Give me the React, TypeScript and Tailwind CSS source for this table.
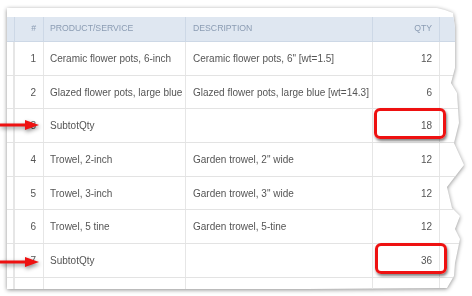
import React from 'react';

type Row = { n: string; product: string; desc: string; qty: string; subtotal?: boolean };

const rows: Row[] = [
  { n: '1', product: 'Ceramic flower pots, 6-inch', desc: 'Ceramic flower pots, 6" [wt=1.5]', qty: '12' },
  { n: '2', product: 'Glazed flower pots, large blue', desc: 'Glazed flower pots, large blue [wt=14.3]', qty: '6' },
  { n: '3', product: 'SubtotQty', desc: '', qty: '18', subtotal: true },
  { n: '4', product: 'Trowel, 2-inch', desc: 'Garden trowel, 2" wide', qty: '12' },
  { n: '5', product: 'Trowel, 3-inch', desc: 'Garden trowel, 3" wide', qty: '12' },
  { n: '6', product: 'Trowel, 5 tine', desc: 'Garden trowel, 5-tine', qty: '12' },
  { n: '7', product: 'SubtotQty', desc: '', qty: '36', subtotal: true },
];

const cols = 'grid grid-cols-[8px_29px_142px_187px_67px_1fr]';

function Arrow({ top }: { top: number }) {
  return (
    <svg
      className="absolute left-0 w-[44px] h-[14px] drop-shadow-[1px_2px_2px_rgba(0,0,0,0.45)]"
      style={{ top }}
      viewBox="0 0 44 14"
    >
      <rect x="0" y="5.5" width="28" height="3" fill="#ee1111" />
      <polygon points="25,2 39,7 25,12" fill="#ee1111" />
    </svg>
  );
}

export default function App() {
  return (
    <div className="relative w-[472px] h-[296px] bg-white overflow-hidden font-['Liberation_Sans',Arial,sans-serif]">
      <div className="ml-[7px] mt-[8px] w-[458px] drop-shadow-[0_1px_2px_rgba(0,0,0,0.45)]">
        <div className="w-[458px] h-[281px] bg-white pt-[9px] [clip-path:polygon(0_0,430px_0,438px_2px,446px_5px,448px_20px,448px_60px,444px_75px,450px_85px,452px_115px,447px_135px,457px_157px,440px_179px,445px_200px,453px_208px,448px_221px,453px_231px,448px_255px,447px_268px,440px_280px,300px_281px,0_281px)]">
          {/* header */}
          <div className={`${cols} h-[25px] bg-[#dfe7f1] border-b border-[#cdd8e6] text-[8.7px] text-[#8b9cb3]`}>
            <div className="border-r border-[#cdd8e6]" />
            <div className="border-r border-[#cdd8e6] flex items-center justify-end pr-[7px]">#</div>
            <div className="border-r border-[#cdd8e6] flex items-center pl-[6px]">PRODUCT/SERVICE</div>
            <div className="border-r border-[#cdd8e6] flex items-center pl-[7px]">DESCRIPTION</div>
            <div className="border-r border-[#cdd8e6] flex items-center justify-end pr-[7px]">QTY</div>
            <div />
          </div>
          {rows.map((r) => (
            <div key={r.n} className={`${cols} h-[33.7px] border-b border-[#e3e3e3] text-[10px] text-[#555]`}>
              <div className="border-r-2 border-double border-[#e6e6e6]" />
              <div className="border-r border-[#e6e6e6] flex items-center justify-end pr-[7px]">{r.n}</div>
              <div className="border-r border-[#e6e6e6] flex items-center pl-[6px] whitespace-nowrap">{r.product}</div>
              <div className="border-r border-[#e6e6e6] flex items-center pl-[7px] whitespace-nowrap">{r.desc}</div>
              <div className="border-r border-[#e6e6e6] flex items-center justify-end pr-[7px]">{r.qty}</div>
              <div />
            </div>
          ))}
          <div className={`${cols} h-[20px]`}>
            <div className="border-r-2 border-double border-[#e6e6e6]" />
            <div className="border-r border-[#e6e6e6]" />
            <div className="border-r border-[#e6e6e6]" />
            <div className="border-r border-[#e6e6e6]" />
            <div className="border-r border-[#e6e6e6]" />
            <div />
          </div>
        </div>
      </div>

      {/* annotations */}
      <Arrow top={118} />
      <Arrow top={255} />
      <div className="absolute left-[374px] top-[108px] w-[72px] h-[31px] rounded-[6px] border-[3px] border-[#ee1111] shadow-[1px_2px_3px_rgba(0,0,0,0.5)]" />
      <div className="absolute left-[375px] top-[243px] w-[72px] h-[31px] rounded-[6px] border-[3px] border-[#ee1111] shadow-[1px_2px_3px_rgba(0,0,0,0.5)]" />
    </div>
  );
}
